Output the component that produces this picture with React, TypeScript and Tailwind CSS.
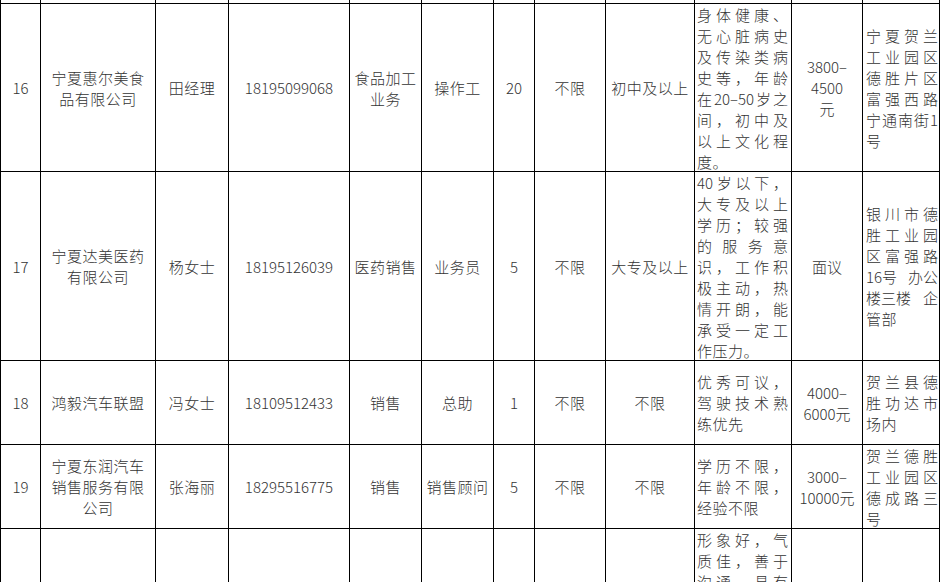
type Just = { lines: string[]; last?: string }

type Row = {
  no: string
  company: string[]
  contact: string
  phone: string
  trade: string[]
  post: string
  count: string
  gender: string
  edu: string
  req: Just
  pay: string[]
  addr: Just
}

const rows: Row[] = [
  {
    no: '16',
    company: ['宁夏惠尔美食', '品有限公司'],
    contact: '田经理',
    phone: '18195099068',
    trade: ['食品加工', '业务'],
    post: '操作工',
    count: '20',
    gender: '不限',
    edu: '初中及以上',
    req: {
      lines: ['身体健康、', '无心脏病史', '及传染类病', '史等，年龄', '在20–50岁之', '间，初中及', '以上文化程'],
      last: '度。',
    },
    pay: ['3800–', '4500', '元'],
    addr: { lines: ['宁夏贺兰', '工业园区', '德胜片区', '富强西路', '宁通南街1'], last: '号' },
  },
  {
    no: '17',
    company: ['宁夏达美医药', '有限公司'],
    contact: '杨女士',
    phone: '18195126039',
    trade: ['医药销售'],
    post: '业务员',
    count: '5',
    gender: '不限',
    edu: '大专及以上',
    req: {
      lines: ['40岁以下，', '大专及以上', '学历；较强', '的服务意', '识，工作积', '极主动，热', '情开朗，能', '承受一定工'],
      last: '作压力。',
    },
    pay: ['面议'],
    addr: { lines: ['银川市德', '胜工业园', '区富强路', '16号|办公', '楼三楼|企'], last: '管部' },
  },
  {
    no: '18',
    company: ['鸿毅汽车联盟'],
    contact: '冯女士',
    phone: '18109512433',
    trade: ['销售'],
    post: '总助',
    count: '1',
    gender: '不限',
    edu: '不限',
    req: { lines: ['优秀可议，', '驾驶技术熟'], last: '练优先' },
    pay: ['4000–', '6000元'],
    addr: { lines: ['贺兰县德', '胜功达市'], last: '场内' },
  },
  {
    no: '19',
    company: ['宁夏东润汽车', '销售服务有限', '公司'],
    contact: '张海丽',
    phone: '18295516775',
    trade: ['销售'],
    post: '销售顾问',
    count: '5',
    gender: '不限',
    edu: '不限',
    req: { lines: ['学历不限，', '年龄不限，'], last: '经验不限' },
    pay: ['3000–', '10000元'],
    addr: { lines: ['贺兰德胜', '工业园区', '德成路三'], last: '号' },
  },
]

function tokens(text: string) {
  if (text.includes('|')) return text.split('|')
  return text.match(/[0-9A-Za-z–-]+|\S/g) ?? []
}

function JustLine({ text }: { text: string }) {
  return (
    <div className="flex justify-between">
      {tokens(text).map((t, i) => (
        <span key={i}>{t}</span>
      ))}
    </div>
  )
}

function Centered({ lines, digits = false }: { lines: string[]; digits?: boolean }) {
  return (
    <div className={`flex items-center justify-center overflow-hidden bg-white text-center ${digits ? 'tracking-normal' : 'tracking-[0.5px]'}`}>
      <div>
        {lines.map((l, i) => (
          <div key={i} className="whitespace-nowrap">
            {l}
          </div>
        ))}
      </div>
    </div>
  )
}

function Justified({ data, pad }: { data: Just; pad: string }) {
  return (
    <div className={`flex items-center overflow-hidden bg-white ${pad}`}>
      <div className="w-full">
        {data.lines.map((l, i) => (
          <JustLine key={i} text={l} />
        ))}
        {data.last && <div className="tracking-[0.5px] whitespace-nowrap">{data.last}</div>}
      </div>
    </div>
  )
}

function Blank() {
  return <div className="bg-white" />
}

export default function App() {
  return (
    <div className="h-[582px] w-[940px] overflow-hidden bg-white">
      <div
        className="grid grid-cols-[39px_114px_72px_120px_71px_71px_40px_70px_88px_96px_70px_76px] grid-rows-[3px_167px_188px_83px_83px_220px] gap-px bg-black px-px pb-px text-[15px] leading-[21px] font-light text-[#333]"
        style={{ fontFamily: '"Noto Sans CJK SC", "Noto Sans", sans-serif' }}
      >
        {Array.from({ length: 12 }).map((_, i) => (
          <Blank key={`top-${i}`} />
        ))}

        {rows.map((r) => (
          <div key={r.no} className="contents">
            <Centered lines={[r.no]} digits />
            <Centered lines={r.company} />
            <Centered lines={[r.contact]} />
            <Centered lines={[r.phone]} digits />
            <Centered lines={r.trade} />
            <Centered lines={[r.post]} />
            <Centered lines={[r.count]} digits />
            <Centered lines={[r.gender]} />
            <Centered lines={[r.edu]} />
            <Justified data={r.req} pad="pl-[2px] pr-[3px]" />
            <Centered lines={r.pay} digits />
            <Justified data={r.addr} pad="pl-[3px] pr-px" />
          </div>
        ))}

        {Array.from({ length: 9 }).map((_, i) => (
          <Blank key={`b-${i}`} />
        ))}
        {/* 第20行只露出开头几行 */}
        <div className="overflow-hidden bg-white pl-[2px] pr-[3px]">
          {['形象好，气', '质佳，善于', '沟通，具有', '良好的服务', '意识和团队', '合作精神，'].map((l, i) => (
            <JustLine key={i} text={l} />
          ))}
        </div>
        <Blank />
        <Blank />
      </div>
    </div>
  )
}
